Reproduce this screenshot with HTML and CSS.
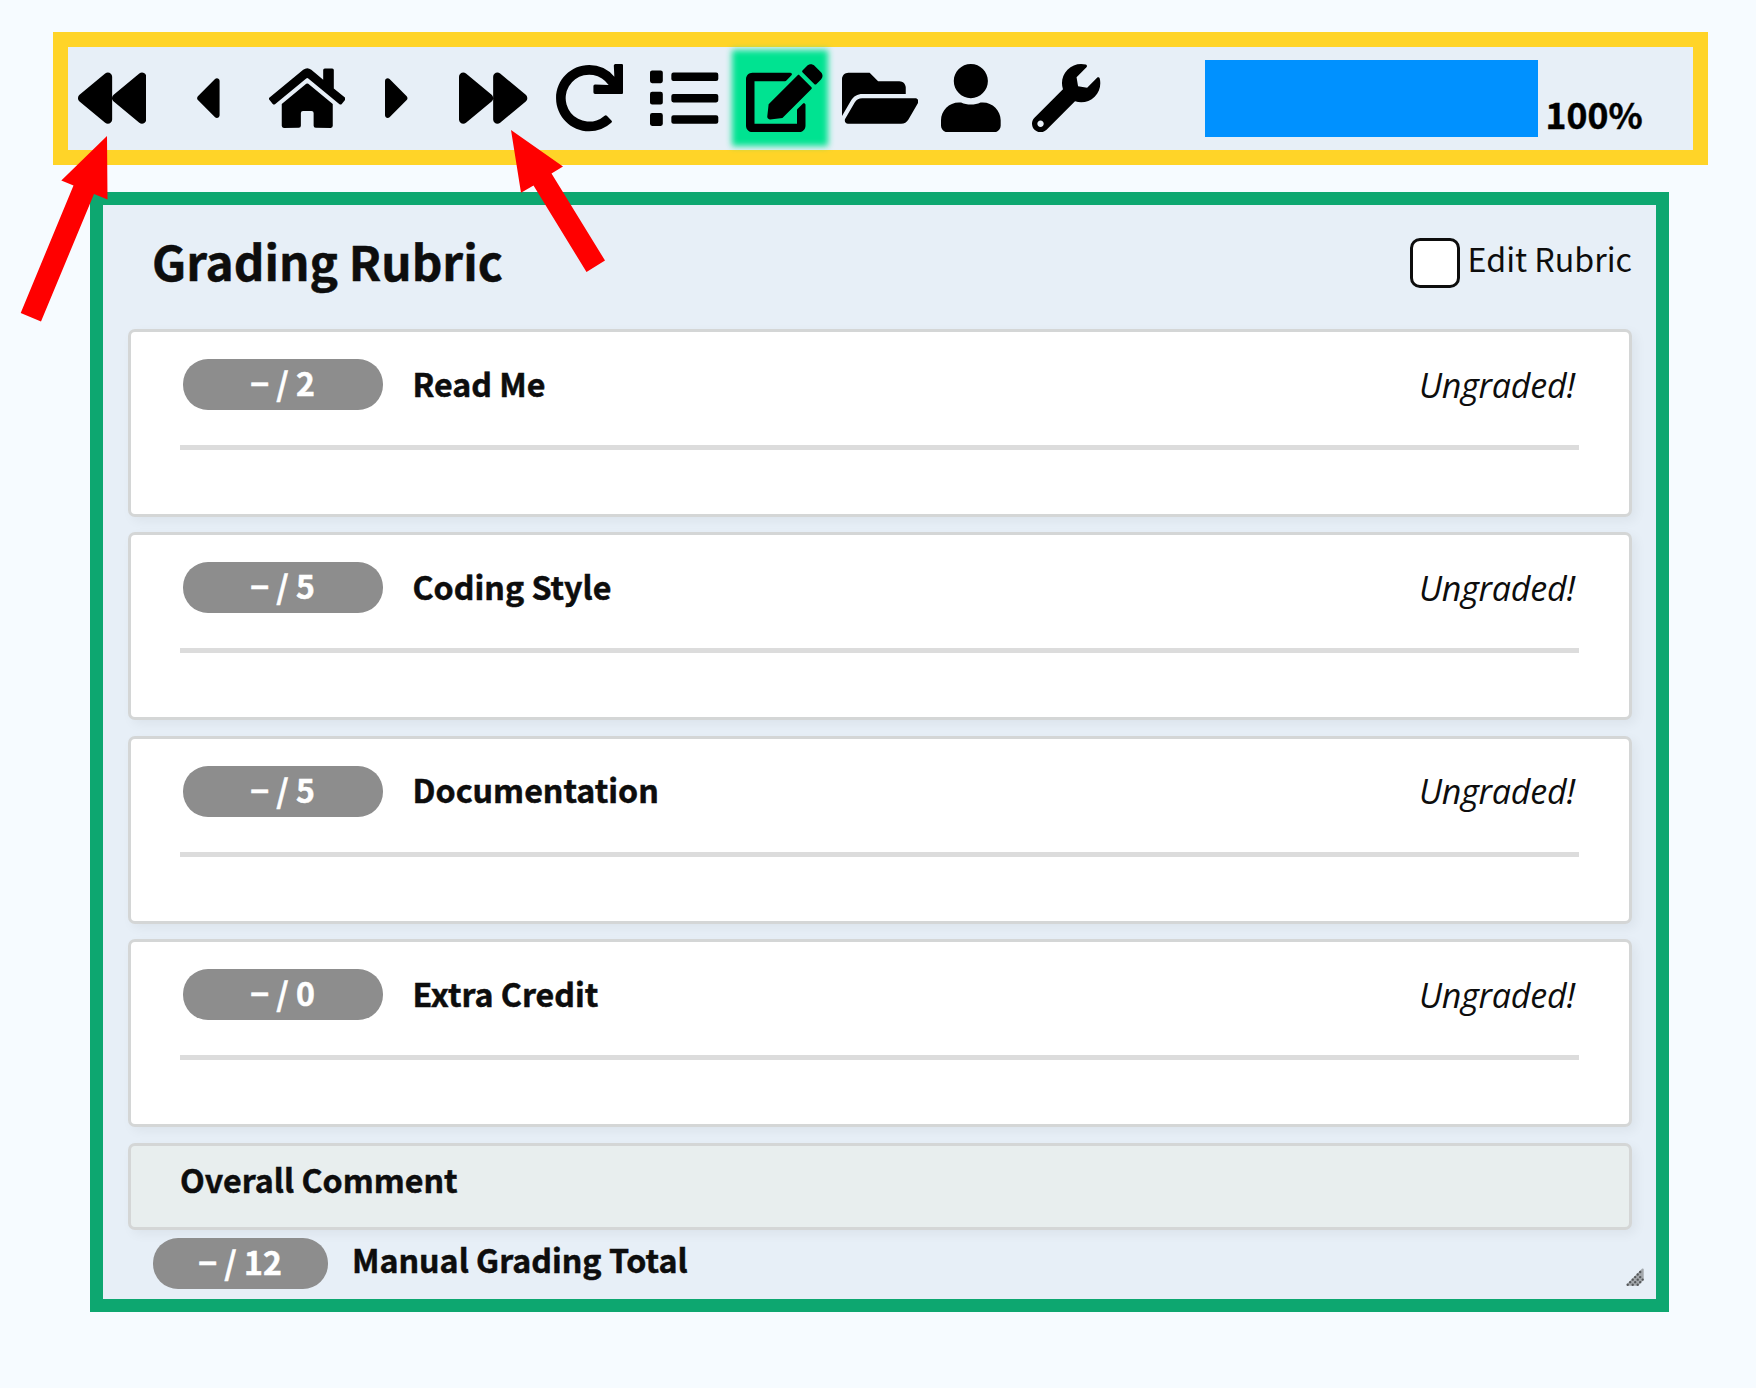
FILE: index.html
```html
<!DOCTYPE html>
<html lang="en">
<head>
<meta charset="utf-8">
<title>Grading Rubric</title>
<link rel="stylesheet" href="styles.css">
</head>
<body>
<nav class="toolbar">
  <svg class="icon first" viewBox="0 0 512 512"><path d="M11.5 280.6l192 160c20.6 17.2 52.5 2.8 52.5-24.6V96c0-27.4-31.9-41.8-52.5-24.6l-192 160c-15.3 12.8-15.3 36.4 0 49.2zm256 0l192 160c20.6 17.2 52.5 2.8 52.5-24.6V96c0-27.4-31.9-41.8-52.5-24.6l-192 160c-15.3 12.8-15.3 36.4 0 49.2z"/></svg>
  <svg class="icon caret prev" viewBox="0 0 192 512"><path d="M192 127.338v257.324c0 17.818-21.543 26.741-34.142 14.142L29.196 270.142c-7.81-7.81-7.81-20.474 0-28.284l128.662-128.662c12.599-12.6 34.142-3.676 34.142 14.142z"/></svg>
  <svg class="icon wide home" viewBox="0 0 576 512"><path d="M280.37 148.26L96 300.11V464a16 16 0 0 0 16 16l112.06-.29a16 16 0 0 0 15.92-16V368a16 16 0 0 1 16-16h64a16 16 0 0 1 16 16v95.64a16 16 0 0 0 16 16.05L464 480a16 16 0 0 0 16-16V300L295.67 148.26a12.19 12.19 0 0 0-15.3 0zM571.6 251.47L488 182.56V44.05a12 12 0 0 0-12-12h-56a12 12 0 0 0-12 12v72.61L318.47 43a48 48 0 0 0-61 0L4.34 251.47a12 12 0 0 0-1.6 16.9l25.5 31A12 12 0 0 0 45.15 301l235.22-193.74a12.19 12.19 0 0 1 15.3 0L530.9 301a12 12 0 0 0 16.9-1.6l25.5-31a12 12 0 0 0-1.7-16.93z"/></svg>
  <svg class="icon caret next" viewBox="0 0 192 512"><path d="M0 384.662V127.338c0-17.818 21.543-26.741 34.142-14.142l128.662 128.662c7.81 7.81 7.81 20.474 0 28.284L34.142 398.804C21.543 411.404 0 402.48 0 384.662z"/></svg>
  <svg class="icon last" viewBox="0 0 512 512"><path d="M500.5 231.4l-192-160C287.9 54.3 256 68.6 256 96v320c0 27.4 31.9 41.8 52.5 24.6l192-160c15.3-12.8 15.3-36.4 0-49.2zm-256 0l-192-160C31.9 54.3 0 68.6 0 96v320c0 27.4 31.9 41.8 52.5 24.6l192-160c15.3-12.8 15.3-36.4 0-49.2z"/></svg>
  <svg class="icon redo" viewBox="0 0 512 512"><path d="M500.33 0h-47.41a12 12 0 0 0-12 12.57l4 82.76A247.42 247.42 0 0 0 256 8C119.34 8 7.9 119.53 8 256.19 8.1 393.07 119.1 504 256 504a247.1 247.1 0 0 0 166.18-63.91 12 12 0 0 0 .48-17.43l-34-34a12 12 0 0 0-16.38-.55A176 176 0 1 1 402.1 157.8l-101.53-4.87a12 12 0 0 0-12.57 12v47.41a12 12 0 0 0 12 12h200.33a12 12 0 0 0 12-12V12a12 12 0 0 0-12-12z"/></svg>
  <svg class="icon list" viewBox="0 0 512 512"><path d="M80 368H16a16 16 0 0 0-16 16v64a16 16 0 0 0 16 16h64a16 16 0 0 0 16-16v-64a16 16 0 0 0-16-16zm0-320H16A16 16 0 0 0 0 64v64a16 16 0 0 0 16 16h64a16 16 0 0 0 16-16V64a16 16 0 0 0-16-16zm0 160H16a16 16 0 0 0-16 16v64a16 16 0 0 0 16 16h64a16 16 0 0 0 16-16v-64a16 16 0 0 0-16-16zm416 176H176a16 16 0 0 0-16 16v32a16 16 0 0 0 16 16h320a16 16 0 0 0 16-16v-32a16 16 0 0 0-16-16zm0-320H176a16 16 0 0 0-16 16v32a16 16 0 0 0 16 16h320a16 16 0 0 0 16-16V80a16 16 0 0 0-16-16zm0 160H176a16 16 0 0 0-16 16v32a16 16 0 0 0 16 16h320a16 16 0 0 0 16-16v-32a16 16 0 0 0-16-16z"/></svg>
  <span class="active"><svg class="icon wide" viewBox="0 0 576 512"><path d="M402.6 83.2l90.2 90.2c3.8 3.8 3.8 10 0 13.8L274.4 405.6l-92.8 10.3c-12.4 1.4-22.9-9.1-21.5-21.5l10.3-92.8L388.8 83.2c3.8-3.8 10-3.8 13.8 0zm162-22.9l-48.8-48.8c-15.2-15.2-39.9-15.2-55.2 0l-35.4 35.4c-3.8 3.8-3.8 10 0 13.8l90.2 90.2c3.8 3.8 10 3.8 13.8 0l35.4-35.4c15.2-15.3 15.2-40 0-55.2zM384 346.2V448H64V128h229.8c3.2 0 6.2-1.3 8.5-3.5l40-40c7.6-7.6 2.2-20.5-8.5-20.5H48C21.5 64 0 85.5 0 112v352c0 26.5 21.5 48 48 48h352c26.5 0 48-21.5 48-48V306.2c0-10.7-12.9-16-20.5-8.5l-40 40c-2.2 2.3-3.5 5.3-3.5 8.5z"/></svg></span>
  <svg class="icon wide folder" viewBox="0 0 576 512"><path d="M572.694 292.093L500.27 416.248A63.997 63.997 0 0 1 444.989 448H45.025c-18.523 0-30.064-20.093-20.731-36.093l72.424-124.155A64 64 0 0 1 152 256h399.964c18.523 0 30.064 20.093 20.73 36.093zM152 224h328v-48c0-26.51-21.49-48-48-48H272l-64-64H48C21.49 64 0 85.49 0 112v278.046l69.077-118.418C86.214 242.25 117.989 224 152 224z"/></svg>
  <svg class="icon user" viewBox="0 0 448 512"><path d="M224 256c70.7 0 128-57.3 128-128S294.7 0 224 0 96 57.3 96 128s57.3 128 128 128zm89.6 32h-16.7c-22.2 10.2-46.9 16-72.9 16s-50.6-5.8-72.9-16h-16.7C60.2 288 0 348.2 0 422.4V464c0 26.5 21.5 48 48 48h352c26.5 0 48-21.5 48-48v-41.6c0-74.2-60.2-134.4-134.4-134.4z"/></svg>
  <svg class="icon wrench" viewBox="0 0 512 512"><path d="M507.73 109.1c-2.24-9.03-13.54-12.09-20.12-5.51l-74.36 74.36-67.88-11.31-11.31-67.88 74.36-74.36c6.62-6.62 3.43-17.9-5.66-20.16-47.38-11.74-99.55.91-136.58 37.93-39.64 39.64-50.55 97.1-34.05 147.2L18.74 402.76c-24.99 24.99-24.99 65.51 0 90.5 24.99 24.99 65.51 24.99 90.5 0l213.21-213.21c50.12 16.71 107.47 5.68 147.37-34.22 37.07-37.07 49.7-89.32 37.91-136.73zM64 472c-13.25 0-24-10.75-24-24 0-13.26 10.75-24 24-24s24 10.74 24 24c0 13.25-10.75 24-24 24z"/></svg>
  <div class="progress"></div>
  <b class="percent">100%</b>
</nav>

<main class="panel">
  <header class="panel-head">
    <h1>Grading Rubric</h1>
    <label class="edit"><span class="box"></span><span class="edit-text">Edit Rubric</span></label>
  </header>
  <section class="cards">
    <article class="card"><div class="row"><span class="pill">− / 2</span><b class="name">Read Me</b><i class="status">Ungraded!</i></div><div class="rule"></div></article>
    <article class="card"><div class="row"><span class="pill">− / 5</span><b class="name">Coding Style</b><i class="status">Ungraded!</i></div><div class="rule"></div></article>
    <article class="card"><div class="row"><span class="pill">− / 5</span><b class="name">Documentation</b><i class="status">Ungraded!</i></div><div class="rule"></div></article>
    <article class="card"><div class="row"><span class="pill">− / 0</span><b class="name">Extra Credit</b><i class="status">Ungraded!</i></div><div class="rule"></div></article>
    <article class="card overall"><b>Overall Comment</b></article>
  </section>
  <footer class="total">
    <span class="pill small">− / 12</span><b class="name">Manual Grading Total</b>
    <svg class="grip" viewBox="0 0 20 20"><path class="grip-base" d="M1.700 16.700L16.700 1.500V11.600L11.700 16.700Z"/><path class="grip-dots" d="M1.700 16.700L16.700 1.500M6.700 16.700L16.700 6.600M11.700 16.700L16.700 11.600"/></svg>
  </footer>
</main>

<svg class="arrows" viewBox="0 0 640 340"><g fill="#f00"><path d="M107 136L107.500 199.500L94 194L41 321.500L20.700 313L73.500 185.500L61.300 180.500Z"/><path d="M511 130L563 166.500L551.500 173.500L605 260.500L586.500 272L533.500 185.500L521 192.700Z"/></g></svg>
</body>
</html>
```

FILE: styles.css
```css
* { box-sizing: border-box; }

body {
  margin: 0;
  padding: 32px 48px 0 53px;
  height: 1388px;
  background: #f6fbff;
  color: #0d0d0d;
  font-family: "Noto Sans CJK SC", "Source Sans Pro", sans-serif;
  font-size: 32.2px;
  overflow: hidden;
}

b, h1, .pill { -webkit-text-stroke: 0.5px currentColor; }

.toolbar {
  display: flex;
  align-items: center;
  height: 133px;
  padding-left: 9.5px;
  border: 15px solid #ffd428;
  background: #e7eff7;
  color: #000;
}
.icon { flex: none; width: 68.300px; height: 68.300px; fill: #000; display: block; margin-top: -1.5px; }
.caret { width: 25.600px; }
.wide { width: 76.500px; }
.prev { margin-left: 48.500px; }
.home { margin-left: 48.700px; }
.next { margin-left: 39.900px; }
.last { margin-left: 48.700px; }
.redo { margin-left: 27.400px; }
.list { margin-left: 27px; }
.active {
  position: relative;
  display: flex;
  flex: none;
  align-items: center;
  justify-content: center;
  width: 96px;
  height: 96px;
  margin-left: 13.800px;
  margin-top: -1px;
}
.active::before {
  content: "";
  position: absolute;
  inset: 0;
  background: #00e391;
  filter: blur(3px);
}
.active .icon { position: relative; margin-left: 8px; margin-top: -0.5px; }
.folder { margin-left: 13.200px; }
.user { width: 59.700px; margin-left: 23.300px; }
.wrench { margin-left: 31.400px; }
.progress { flex: none; width: 333px; height: 77px; margin-left: 103.900px; background: #0091ff; }
.percent { margin: 30px 0 0 8px; font-size: 35.5px; line-height: 50px; }

.panel {
  width: 1579px;
  height: 1120px;
  margin: 27px 0 0 37px;
  border: 13px solid #0da770;
  background: #e7eff7;
}
.panel-head {
  display: flex;
  justify-content: space-between;
  align-items: flex-start;
  height: 124px;
  padding: 0 24px 0 49px;
}
h1 { margin: 21px 0 0; font-size: 47.7px; line-height: 70px; white-space: nowrap; }
.edit { display: flex; align-items: flex-start; margin-top: 33px; }
.box { width: 50px; height: 50px; border: 3px solid #0d0d0d; border-radius: 10px; background: #fff; }
.edit-text { margin-left: 8px; font-size: 32.200px; line-height: 40px; white-space: nowrap; }

.cards { display: flex; flex-direction: column; gap: 15.400px; padding: 0 24px 0 25px; }
.card {
  height: 188px;
  padding: 27px 50px 0 49px;
  border: 3px solid #d4d6d6;
  border-radius: 7px;
  background: #fff;
  box-shadow: 4px 4px 12px rgba(0, 0, 0, .05);
}
.row { display: flex; align-items: center; height: 51px; padding-left: 3px; }
.pill {
  flex: none;
  width: 200px;
  height: 51px;
  padding-right: 1px;
  border-radius: 25px;
  background: #8d8d8d;
  color: #fff;
  font-size: 32px;
  font-weight: bold;
  line-height: 46px;
  text-align: center;
}
.name { margin: -4px 0 0 29.5px; line-height: 50px; white-space: nowrap; }
.status {
  margin: 0 0 0 auto;
  padding-right: 4px;
  font-family: "Open Sans", "Noto Sans", sans-serif;
  font-size: 34px;
  letter-spacing: -0.2px;
  line-height: 50px;
}
.rule { height: 5px; margin-top: 35px; background: #dcdcdc; }
.overall { height: 87px; padding-top: 8px; line-height: 50px; background: #e8eeee; }
.total { display: flex; align-items: flex-start; padding: 8px 10px 0 50px; }
.small { width: 175px; }
.total .name { margin: 0 0 0 24px; line-height: 43px; }
.grip {
  width: 20px;
  height: 20px;
  margin: 30px 0 0 auto;
}
.grip-base { fill: #a4a8ac; stroke: #a4a8ac; stroke-width: 2; stroke-linejoin: round; }
.grip-dots {
  fill: none;
  stroke: #55585a;
  stroke-width: 2.400;
  stroke-linecap: round;
  stroke-dasharray: 0 3.560;
}

.arrows { position: absolute; left: 0; top: 0; width: 640px; height: 340px; }
```
